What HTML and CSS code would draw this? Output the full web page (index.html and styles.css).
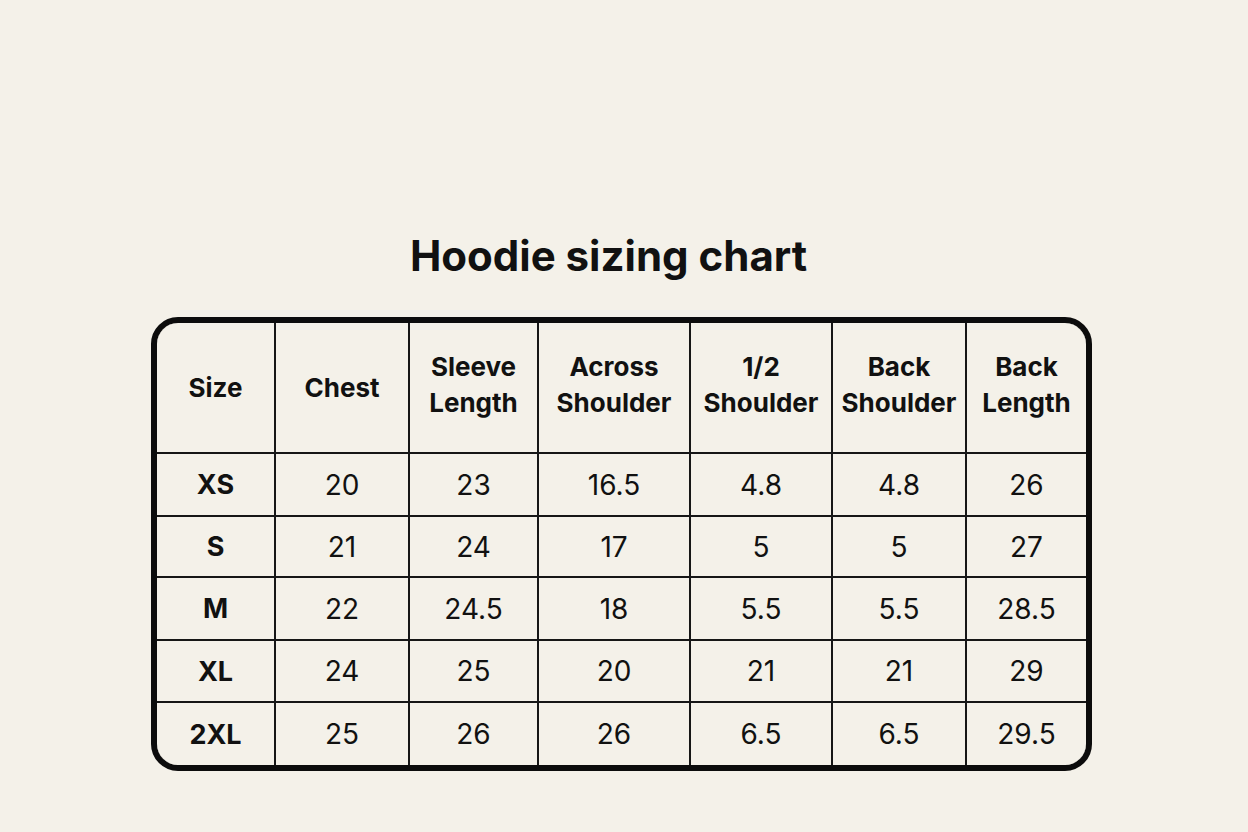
FILE: index.html
```html
<!DOCTYPE html>
<html lang="en">
<head>
<meta charset="utf-8">
<title>Hoodie sizing chart</title>
<link rel="stylesheet" href="styles.css">
</head>
<body>
<main class="page">
  <h1 class="title">Hoodie sizing chart</h1>
  <div class="chart">
    <div class="grid">
      <div class="cell head single">Size</div>
      <div class="cell head single">Chest</div>
      <div class="cell head">Sleeve<br>Length</div>
      <div class="cell head">Across<br>Shoulder</div>
      <div class="cell head">1/2<br>Shoulder</div>
      <div class="cell head">Back<br>Shoulder</div>
      <div class="cell head">Back<br>Length</div>

      <div class="cell size">XS</div>
      <div class="cell">20</div>
      <div class="cell">23</div>
      <div class="cell">16.5</div>
      <div class="cell">4.8</div>
      <div class="cell">4.8</div>
      <div class="cell">26</div>

      <div class="cell size">S</div>
      <div class="cell">21</div>
      <div class="cell">24</div>
      <div class="cell">17</div>
      <div class="cell">5</div>
      <div class="cell">5</div>
      <div class="cell">27</div>

      <div class="cell size">M</div>
      <div class="cell">22</div>
      <div class="cell">24.5</div>
      <div class="cell">18</div>
      <div class="cell">5.5</div>
      <div class="cell">5.5</div>
      <div class="cell">28.5</div>

      <div class="cell size">XL</div>
      <div class="cell">24</div>
      <div class="cell">25</div>
      <div class="cell">20</div>
      <div class="cell">21</div>
      <div class="cell">21</div>
      <div class="cell">29</div>

      <div class="cell size">2XL</div>
      <div class="cell">25</div>
      <div class="cell">26</div>
      <div class="cell">26</div>
      <div class="cell">6.5</div>
      <div class="cell">6.5</div>
      <div class="cell">29.5</div>
    </div>
  </div>
</main>
</body>
</html>
```
FILE: styles.css
```css
html, body {
  margin: 0;
  padding: 0;
}
body {
  background: #f4f1e9;
  color: #111;
  font-family: Inter, "Liberation Sans", sans-serif;
  width: 1248px;
  height: 832px;
  overflow: hidden;
}
.page {
  display: flex;
  flex-direction: column;
  align-items: flex-start;
  padding-top: 230px;
  padding-left: 151px;
}
.title {
  margin: 0;
  width: 941px;
  padding-right: 26px;
  box-sizing: border-box;
  text-align: center;
  font-size: 42px;
  font-weight: 700;
  line-height: 52px;
  letter-spacing: 0;
}
.chart {
  margin-top: 35px;
  width: 941px;
  box-sizing: border-box;
  border: 6px solid #0c0c0c;
  border-radius: 27px;
  overflow: hidden;
}
.grid {
  display: grid;
  grid-template-columns: 117px 132px 127px 150px 140px 132px 119px;
  grid-template-rows: 129px 61px 59px 61px 60px 62px;
  gap: 2px;
  background: #161616;
}
.cell {
  background: #f4f1e9;
  display: flex;
  align-items: center;
  justify-content: center;
  text-align: center;
  font-size: 28px;
  font-weight: 400;
  line-height: 1;
}
.cell.head {
  font-size: 26px;
  font-weight: 700;
  line-height: 36px;
  padding-bottom: 5px;
}
.cell.head.single {
  padding-bottom: 0;
}
.cell.size {
  font-weight: 700;
  font-size: 27px;
}
```
